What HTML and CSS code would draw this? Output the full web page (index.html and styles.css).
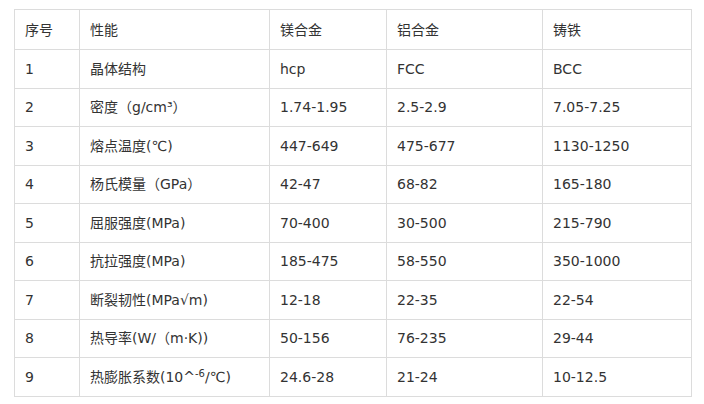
FILE: index.html
```html
<!DOCTYPE html>
<html lang="zh-CN">
<head>
<meta charset="utf-8">
<link rel="stylesheet" href="styles.css">
</head>
<body>
<table class="props">
<colgroup>
<col class="c1"><col class="c2"><col class="c3"><col class="c4"><col class="c5">
</colgroup>
<thead>
<tr class="head"><td>序号</td><td>性能</td><td>镁合金</td><td>铝合金</td><td>铸铁</td></tr>
</thead>
<tbody>
<tr><td>1</td><td>晶体结构</td><td>hcp</td><td>FCC</td><td>BCC</td></tr>
<tr><td>2</td><td>密度（g/cm³）</td><td>1.74-1.95</td><td>2.5-2.9</td><td>7.05-7.25</td></tr>
<tr><td>3</td><td>熔点温度(℃)</td><td>447-649</td><td>475-677</td><td>1130-1250</td></tr>
<tr><td>4</td><td>杨氏模量（GPa）</td><td>42-47</td><td>68-82</td><td>165-180</td></tr>
<tr><td>5</td><td>屈服强度(MPa)</td><td>70-400</td><td>30-500</td><td>215-790</td></tr>
<tr><td>6</td><td>抗拉强度(MPa)</td><td>185-475</td><td>58-550</td><td>350-1000</td></tr>
<tr><td>7</td><td>断裂韧性(MPa√m)</td><td>12-18</td><td>22-35</td><td>22-54</td></tr>
<tr><td>8</td><td>热导率(W/（m·K))</td><td>50-156</td><td>76-235</td><td>29-44</td></tr>
<tr><td>9</td><td>热膨胀系数(10^<sup>-6</sup>/℃)</td><td>24.6-28</td><td>21-24</td><td>10-12.5</td></tr>
</tbody>
</table>
</body>
</html>
```
FILE: styles.css
```css
html, body {
  margin: 0;
  padding: 0;
  background: #fff;
}
body {
  font-family: "DejaVu Sans", "Noto Sans CJK SC", sans-serif;
  font-size: 14px;
  color: #333;
}
.props {
  margin: 9px 0 0 14px;
  border-collapse: collapse;
  table-layout: fixed;
  width: 677px;
}
.c1 { width: 65px; }
.c2 { width: 190px; }
.c3 { width: 117px; }
.c4 { width: 156px; }
.c5 { width: 149px; }
.props td {
  border: 1px solid #dcdcdc;
  padding: 0 10px;
  height: 37.5px;
  line-height: 20px;
  vertical-align: middle;
  white-space: nowrap;
}
.props .head td {
  height: 39px;
}
.props sup {
  font-size: 10px;
  line-height: 0;
  vertical-align: 5px;
}
```
